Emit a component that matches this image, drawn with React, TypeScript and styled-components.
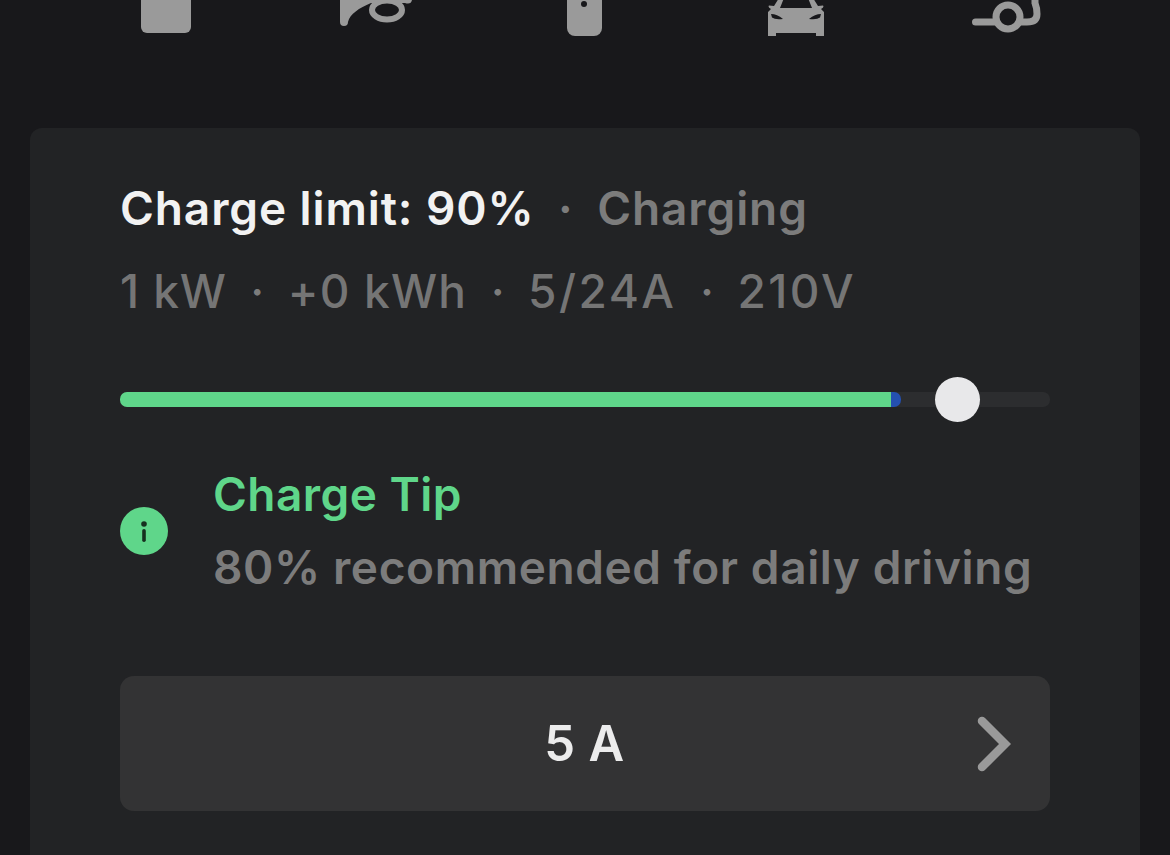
import styled, { createGlobalStyle } from 'styled-components';

const GlobalStyle = createGlobalStyle`
  html, body {
    margin: 0;
    height: 855px;
    overflow: hidden;
    background: #18181b;
    font-family: Inter, 'Noto Sans', sans-serif;
  }
`;

const PLUG_BG = '#18181b';
const ICON = '#9a9a9a';

const TrunkIcon = () => (
  <svg width='80' height='40' viewBox='0 0 80 40'>
    <path fill={ICON} d='M16 -10H66V27a6 6 0 0 1-6 6H22a6 6 0 0 1-6-6Z' />
  </svg>
);

const PlugIcon = () => (
  <svg width='80' height='40' viewBox='0 0 80 40'>
    <path
      fill={ICON}
      d='M5 -4V22a4 4 0 0 0 8 0C15 14 24 8 36 3H70Q76 5 77 0V-4Z'
    />
    <ellipse cx='52' cy='10' rx='15' ry='9.5' fill={PLUG_BG} stroke={ICON} strokeWidth='6' />
  </svg>
);

const PhoneIcon = () => (
  <svg width='80' height='40' viewBox='0 0 80 40'>
    <path fill={ICON} d='M22 -10H57V28a8 8 0 0 1-8 8H30a8 8 0 0 1-8-8Z' />
    <circle cx='39' cy='4' r='3' fill={PLUG_BG} />
  </svg>
);

const CarIcon = () => (
  <svg width='80' height='40' viewBox='0 0 80 40'>
    <path
      fill={ICON}
      d='M24 -2H58L63 6L68 5.500Q69.500 7 66 9L69 12V36H61V33H21V36H13V12L16 9Q12.500 7 14 5.500L19 6Z'
    />
    <path fill={PLUG_BG} d='M29 -2H53L57 8H25Z' />
    <path fill={PLUG_BG} d='M16 14Q22 14 28 19Q20 20 17 17.500ZM66 14Q60 14 54 19Q62 20 65 17.500Z' />
  </svg>
);

const CableIcon = () => (
  <svg width='80' height='40' viewBox='0 0 80 40'>
    <g fill='none' stroke={ICON} strokeWidth='7' strokeLinecap='round'>
      <circle cx='43' cy='17' r='12' />
      <path d='M10.500 22H30' />
      <path d='M56 22H62Q72 22 72 14Q72 8 70 3V-4' />
    </g>
  </svg>
);

const stats = [
  { label: '1 kW', tracking: 0.9 },
  { label: '+0 kWh', tracking: 1.2 },
  { label: '5/24A', tracking: 2.5 },
  { label: '210V', tracking: 2.4 },
];

const App = () => (
  <Page>
    <GlobalStyle />
    <IconRow>
      <IconCell><TrunkIcon /></IconCell>
      <IconCell><PlugIcon /></IconCell>
      <IconCell><PhoneIcon /></IconCell>
      <IconCell><CarIcon /></IconCell>
      <IconCell><CableIcon /></IconCell>
    </IconRow>
    <Card>
      <Heading>
        <strong>Charge limit: 90%</strong>
        <Dot>·</Dot>
        <span>Charging</span>
      </Heading>
      <Stats>
        {stats.map((s, i) => (
          <StatItem key={s.label}>
            {i > 0 && <Dot>·</Dot>}
            <StatValue $tracking={s.tracking}>{s.label}</StatValue>
          </StatItem>
        ))}
      </Stats>
      <Slider>
        <Fill $width={771} />
        <Added $width={10} />
        <Thumb $left={838} />
      </Slider>
      <Tip>
        <TipBadge>
          <svg width='48' height='48' viewBox='0 0 48 48'>
            <circle cx='24' cy='24' r='24' fill='#5fd68a' />
            <circle cx='24' cy='17' r='2.800' fill='#16301f' />
            <rect x='22.200' y='22' width='3.600' height='13' rx='1.800' fill='#16301f' />
          </svg>
        </TipBadge>
        <TipText>
          <TipTitle>Charge Tip</TipTitle>
          <TipBody>80% recommended for daily driving</TipBody>
        </TipText>
      </Tip>
      <AmpButton>
        5 A
        <Chevron width='36' height='58' viewBox='0 0 36 58'>
          <path d='M6 6L29 29L6 52' fill='none' stroke='#9a9a9a' strokeWidth='8.500' strokeLinecap='round' strokeLinejoin='miter' />
        </Chevron>
      </AmpButton>
    </Card>
  </Page>
);

const Page = styled.div`
  height: 855px;
  padding: 0 30px;
  overflow: hidden;
  box-sizing: border-box;
`;

const IconRow = styled.div`
  display: flex;
  justify-content: center;
  height: 128px;
`;

const IconCell = styled.div`
  width: 210px;
  height: 40px;
  display: flex;
  justify-content: center;
`;

const Card = styled.div`
  background: #222325;
  border-radius: 12px;
  padding: 49px 90px 60px;
  height: 800px;
  box-sizing: border-box;
`;

const Heading = styled.div`
  display: flex;
  align-items: center;
  height: 62px;
  font-size: 46px;
  font-weight: 600;
  letter-spacing: 0.9px;
  color: #7c7c7c;
  white-space: nowrap;

  & strong {
    font-weight: 600;
    color: #f2f2f2;
  }
`;

const Dot = styled.span`
  margin: 0 23.5px;
  color: #7c7c7c;
`;

const Stats = styled.div`
  display: flex;
  margin-top: 21px;
  height: 62px;
  align-items: center;
  font-size: 46px;
  font-weight: 500;
  color: #757575;
  white-space: nowrap;
`;

const StatItem = styled.span`
  display: flex;
  align-items: center;
`;

const StatValue = styled.span<{ $tracking: number }>`
  letter-spacing: ${p => p.$tracking}px;
`;

const Slider = styled.div`
  position: relative;
  display: flex;
  margin-top: 70px;
  height: 15px;
  border-radius: 7px;
  background: #2c2d2f;
`;

const Fill = styled.div<{ $width: number }>`
  width: ${p => p.$width}px;
  background: #5fd68a;
  border-radius: 7px 0 0 7px;
`;

const Added = styled.div<{ $width: number }>`
  width: ${p => p.$width}px;
  background: #2450b0;
  border-radius: 0 7px 7px 0;
`;

const Thumb = styled.div<{ $left: number }>`
  position: absolute;
  left: ${p => p.$left - 23}px;
  top: -15px;
  width: 45px;
  height: 45px;
  border-radius: 50%;
  background: #e8e8ea;
`;

const Tip = styled.div`
  display: flex;
  align-items: center;
  margin-top: 56px;
  gap: 45px;
`;

const TipBadge = styled.div`
  width: 48px;
  height: 48px;
  flex: none;
`;

const TipText = styled.div`
  display: flex;
  flex-direction: column;
  gap: 12px;
`;

const TipTitle = styled.div`
  font-size: 46px;
  font-weight: 600;
  line-height: 62px;
  letter-spacing: 0.45px;
  color: #5fd68a;
`;

const TipBody = styled.div`
  font-size: 46px;
  font-weight: 600;
  line-height: 62px;
  letter-spacing: 0.6px;
  color: #7c7c7c;
  white-space: nowrap;
  margin-top: -1px;
`;

const AmpButton = styled.div`
  position: relative;
  display: flex;
  align-items: center;
  justify-content: center;
  margin-top: 78px;
  height: 135px;
  border-radius: 14px;
  background: #333334;
  font-size: 49px;
  font-weight: 600;
  letter-spacing: 1.5px;
  word-spacing: -2px;
  color: #ececec;
`;

const Chevron = styled.svg`
  position: absolute;
  right: 38px;
  top: 39px;
`;

export default App;
